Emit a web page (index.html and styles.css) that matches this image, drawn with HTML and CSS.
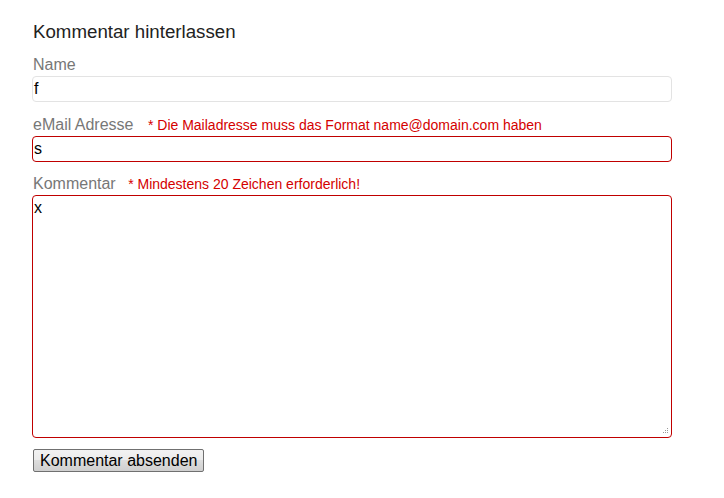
FILE: index.html
```html
<!DOCTYPE html>
<html lang="de">
<head>
<meta charset="utf-8">
<link rel="stylesheet" href="styles.css">
</head>
<body>
<form class="comment-form">
  <h3 class="title">Kommentar hinterlassen</h3>
  <div class="field">
    <label class="label">Name</label>
    <div class="input">f</div>
  </div>
  <div class="field">
    <label class="label">eMail Adresse <span class="error">* Die Mailadresse muss das Format name@domain.com haben</span></label>
    <div class="input invalid">s</div>
  </div>
  <div class="field field-comment">
    <label class="label">Kommentar <span class="error">* Mindestens 20 Zeichen erforderlich!</span></label>
    <div class="input invalid textarea">x
      <svg class="grip" width="7" height="7" viewBox="0 0 7 7"><g fill="#999"><rect x="5" y="0" width="1" height="1"/><rect x="3" y="2" width="1" height="1"/><rect x="5" y="2" width="1" height="1"/><rect x="1" y="4" width="1" height="1"/><rect x="3" y="4" width="1" height="1"/><rect x="5" y="4" width="1" height="1"/></g></svg>
    </div>
  </div>
  <div class="actions"><button type="button" class="btn">Kommentar absenden</button></div>
</form>
</body>
</html>
```
FILE: styles.css
```css
html, body { margin: 0; padding: 0; background: #fff; }
body { font-family: "Liberation Sans", Arial, sans-serif; }
.comment-form { width: 640px; padding: 21px 0 0 32px; }
.title { margin: 0 0 0 1px; font-size: 18.7px; font-weight: normal; color: #222; line-height: 21px; }
.field { display: flex; flex-direction: column; }
.label { font-size: 16px; color: #777; line-height: 18px; margin: 14px 0 2px 0; padding-left: 1px; }
.field-comment .label { margin-top: 13px; }
.error { font-size: 14px; color: #d40000; margin-left: 10px; }
.field-comment .error { margin-left: 8px; }
.input { box-sizing: border-box; height: 26px; border: 1px solid #e3e3e3; border-radius: 4px; padding: 2px 0 0 1px; font-size: 16px; line-height: 20px; color: #000; position: relative; }
.invalid { border-color: #c00000; }
.textarea { height: 243px; }
.grip { position: absolute; right: 2px; bottom: 2px; }
.actions { margin-top: 11px; padding-left: 1px; }
.btn { font-family: "Liberation Sans", Arial, sans-serif; font-size: 16px; color: #000; height: 23px; padding: 0 6px; border: 1px solid #707070; border-radius: 2px; background: linear-gradient(#f2f2f2, #ebebeb 50%, #dddddd 50%, #cfcfcf); line-height: 19px; }
```
